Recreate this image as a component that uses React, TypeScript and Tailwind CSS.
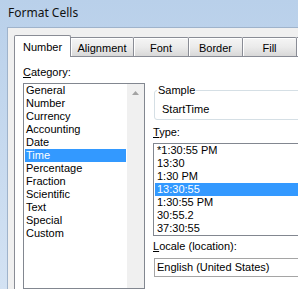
const categories = [
  'General',
  'Number',
  'Currency',
  'Accounting',
  'Date',
  'Time',
  'Percentage',
  'Fraction',
  'Scientific',
  'Text',
  'Special',
  'Custom',
];

const types = ['*1:30:55 PM', '13:30', '1:30 PM', '13:30:55', '1:30:55 PM', '30:55.2', '37:30:55'];

const tabs = [
  { label: 'Alignment', w: 'w-[63px]' },
  { label: 'Font', w: 'w-[55px]' },
  { label: 'Border', w: 'w-[54px]' },
  { label: 'Fill', w: 'w-[54px]' },
  { label: '', w: 'w-[54px]' },
];

function Row({ text, selected, pad }: { text: string; selected: boolean; pad: string }) {
  return (
    <div
      className={`mx-[1px] h-[13px] leading-[13px] whitespace-nowrap ${pad} ${
        selected ? 'bg-[#3399ff] text-white' : 'text-black'
      }`}
    >
      {text}
    </div>
  );
}

export default function App() {
  return (
    <div className="w-[298px] h-[289px] overflow-hidden flex flex-col bg-gradient-to-b from-[#b9d0ea] to-[#d3e2f3] font-['Liberation_Sans',Arial,sans-serif] text-[11px] text-black">
      {/* Title bar */}
      <div className="h-[27px] shrink-0 pl-[8px] pt-[5px] text-[12px] leading-[16px] text-[#111] font-['Noto_Sans',sans-serif]">
        Format Cells
      </div>

      {/* Window body */}
      <div className="flex-1 flex pl-[7px] min-h-0">
        <div className="flex-1 flex flex-col min-w-0 border-l border-t border-[#9fb3cb] bg-[#f0f0f0] pl-[6px] pt-[7px]">
          {/* Tabs */}
          <div className="flex items-end h-[21px] shrink-0">
            <div className="relative z-10 w-[57px] h-[22px] -mb-px shrink-0 border border-b-0 border-[#898c95] rounded-t-[2px] bg-white text-center leading-[13px] pt-[5px]">
              Number
            </div>
            {tabs.map((t) => (
              <div
                key={t.label || 'more'}
                className={`${t.w} h-[19px] shrink-0 border-t border-r border-[#898c95] rounded-tr-[2px] bg-gradient-to-b from-[#f5f5f5] via-[#ebebeb] to-[#d8d8d8] text-center leading-[13px] pt-[4px] shadow-[inset_1px_1px_0_#ffffff]`}
              >
                {t.label}
              </div>
            ))}
          </div>

          {/* Tab page */}
          <div className="flex-1 flex gap-[8px] border-l border-t border-[#898c95] bg-white pl-[8px] pt-[9px] overflow-hidden">
            {/* Category column */}
            <div className="w-[122px] shrink-0 flex flex-col">
              <div className="h-[13px] leading-[13px]">
                <u>C</u>ategory:
              </div>
              <div className="mt-[4px] flex-1 flex border border-[#828790] bg-white">
                <div className="flex-1">
                  {categories.map((c) => (
                    <Row key={c} text={c} selected={c === 'Time'} pad="pl-[1px]" />
                  ))}
                </div>
                <div className="w-[17px] bg-[#f0f0f0] flex justify-center pt-[7px]">
                  <svg width="7" height="4" viewBox="0 0 7 4">
                    <path d="M3.5 0 L7 4 L0 4 Z" fill="#a3a3a3" />
                  </svg>
                </div>
              </div>
            </div>

            {/* Right column */}
            <div className="w-[170px] shrink-0 flex flex-col">
              <div className="relative mt-[24px] ml-[1px] h-[30px] border border-[#d5dfe5] rounded-[3px] pl-[7px] pt-[12px]">
                <span className="absolute left-[2px] top-[-7px] px-[1px] bg-white leading-[13px]">Sample</span>
                <div className="leading-[13px]">StartTime</div>
              </div>

              <div className="mt-[6px] h-[13px] leading-[13px]">
                <u>T</u>ype:
              </div>
              <div className="mt-[4px] border border-[#828790] bg-white">
                {types.map((t) => (
                  <Row key={t} text={t} selected={t === '13:30:55'} pad="pl-[2px]" />
                ))}
              </div>

              <div className="mt-[4px] h-[13px] leading-[13px]">
                <u>L</u>ocale (location):
              </div>
              <div className="mt-[5px] ml-[1px] h-[19px] border border-[#a5a5a5] bg-white pl-[2px] leading-[17px]">
                English (United States)
              </div>
            </div>
          </div>
        </div>
      </div>
    </div>
  );
}
